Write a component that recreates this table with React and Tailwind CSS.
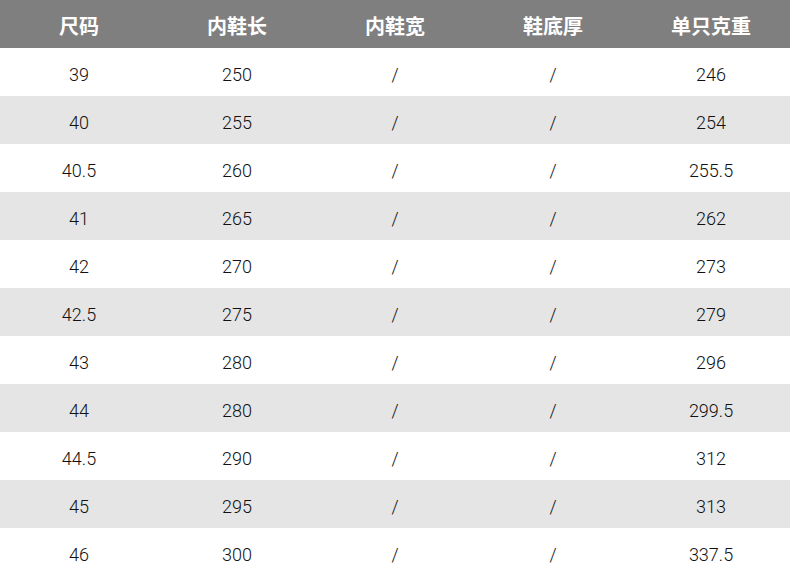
import React from "react";

const rows = [
  ["39", "250", "/", "/", "246"],
  ["40", "255", "/", "/", "254"],
  ["40.5", "260", "/", "/", "255.5"],
  ["41", "265", "/", "/", "262"],
  ["42", "270", "/", "/", "273"],
  ["42.5", "275", "/", "/", "279"],
  ["43", "280", "/", "/", "296"],
  ["44", "280", "/", "/", "299.5"],
  ["44.5", "290", "/", "/", "312"],
  ["45", "295", "/", "/", "313"],
  ["46", "300", "/", "/", "337.5"],
];

const headers = ["尺码", "内鞋长", "内鞋宽", "鞋底厚", "单只克重"];

export default function App() {
  return (
    <div className="w-[790px] h-[576px] bg-white">
      <div className="grid grid-cols-5 h-[48px] bg-[#7f7f7f]">
        {headers.map((h) => (
          <div
            key={h}
            className="flex items-center justify-center pt-[3px] text-white font-bold text-[20px] font-['Noto_Sans_CJK_SC',sans-serif]"
          >
            {h}
          </div>
        ))}
      </div>
      {rows.map((row, i) => (
        <div
          key={i}
          className={`grid grid-cols-5 h-[48px] ${i % 2 === 1 ? "bg-[#e5e5e5]" : "bg-white"}`}
        >
          {row.map((cell, j) => (
            <div
              key={j}
              className="flex items-center justify-center pt-[5px] text-[#111111] text-[18px] font-light font-['Roboto',sans-serif]"
            >
              {cell}
            </div>
          ))}
        </div>
      ))}
    </div>
  );
}
